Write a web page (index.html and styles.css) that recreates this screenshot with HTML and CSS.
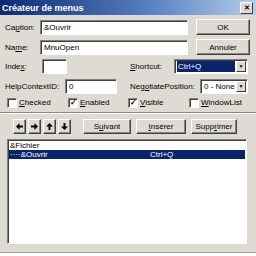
FILE: index.html
```html
<!DOCTYPE html>
<html lang="fr">
<head>
  <meta charset="UTF-8">
  <title>Créateur de menus</title>
  <link rel="stylesheet" href="styles.css">
</head>
<body>
  <div class="window">
    <div class="titlebar">
      <span class="title">Créateur de menus</span>
      <span class="close">✕</span>
    </div>

    <div class="content">
      <div class="row row-caption">
        <label class="lbl w-caption">Ca<u>p</u>tion:</label>
        <div class="field w-long">&amp;Ouvrir</div>
        <div class="btn w-side">OK</div>
      </div>

      <div class="row row-name">
        <label class="lbl w-caption">Na<u>m</u>e:</label>
        <div class="field w-long">MnuOpen</div>
        <div class="btn w-side">Annuler</div>
      </div>

      <div class="row row-index">
        <label class="lbl w-index">Inde<u>x</u>:</label>
        <div class="field w-small"></div>
        <label class="lbl w-shortcut"><u>S</u>hortcut:</label>
        <div class="combo w-combo1">
          <span class="combo-text selected">Ctrl+Q</span>
          <span class="drop">▼</span>
        </div>
      </div>

      <div class="row row-help">
        <label class="lbl w-help">HelpContextID:</label>
        <div class="field w-help-field">0</div>
        <label class="lbl w-nego">Neg<u>o</u>tiatePosition:</label>
        <div class="combo w-combo2">
          <span class="combo-text">0 - None</span>
          <span class="drop">▼</span>
        </div>
      </div>

      <div class="row checks">
        <div class="check"><span class="box"></span><span><u>C</u>hecked</span></div>
        <div class="check"><span class="box on">✓</span><span><u>E</u>nabled</span></div>
        <div class="check"><span class="box on">✓</span><span><u>V</u>isible</span></div>
        <div class="check"><span class="box"></span><span><u>W</u>indowList</span></div>
      </div>

      <div class="separator"></div>

      <div class="row toolbar">
        <div class="btn arrow">
          <svg width="7" height="7" viewBox="0 0 7 7"><path d="M0 3.5 L3.5 0 V2.5 H7 V4.5 H3.5 V7 Z" fill="#000"/></svg>
        </div>
        <div class="btn arrow">
          <svg width="7" height="7" viewBox="0 0 7 7"><path d="M7 3.5 L3.5 0 V2.5 H0 V4.5 H3.5 V7 Z" fill="#000"/></svg>
        </div>
        <div class="btn arrow">
          <svg width="7" height="7" viewBox="0 0 7 7"><path d="M3.5 0 L0 3.5 H2.5 V7 H4.5 V3.5 H7 Z" fill="#000"/></svg>
        </div>
        <div class="btn arrow">
          <svg width="7" height="7" viewBox="0 0 7 7"><path d="M3.5 7 L0 3.5 H2.5 V0 H4.5 V3.5 H7 Z" fill="#000"/></svg>
        </div>
        <div class="btn w-suivant">S<u>u</u>ivant</div>
        <div class="btn w-inserer"><u>I</u>nsérer</div>
        <div class="btn w-suppr">Supp<u>r</u>imer</div>
      </div>

      <div class="list">
        <div class="item">&amp;Fichier</div>
        <div class="item active"><span class="item-name">····&amp;Ouvrir</span><span>Ctrl+Q</span></div>
      </div>
    </div>
  </div>
</body>
</html>
```

FILE: styles.css
```css
body {
  margin: 0;
  background: #ffffff;
}

.window {
  width: 256px;
  height: 253px;
  background: #dedbd4;
  font-family: "Liberation Sans", Arial, sans-serif;
  font-size: 8px;
  color: #000;
  border-bottom: 1px solid #9c9a94;
  box-sizing: border-box;
}

.titlebar {
  height: 15px;
  display: flex;
  align-items: center;
  justify-content: space-between;
  background: linear-gradient(to right, #0c2a72, #5a82c4 60%, #b6cdea);
  padding: 0 3px 0 2px;
}

.title {
  color: #fff;
  font-weight: bold;
  font-size: 9px;
}

.close {
  width: 11px;
  height: 10px;
  background: #dedbd4;
  border: 1px solid;
  border-color: #fff #404040 #404040 #fff;
  font-size: 7px;
  line-height: 10px;
  text-align: center;
  font-weight: bold;
}

.content {
  padding: 0 0 0 5px;
}

.row {
  display: flex;
  align-items: center;
}

.row-caption { margin-top: 4px; height: 16px; }
.row-name { margin-top: 4px; height: 16px; }
.row-index { margin-top: 4px; height: 15px; }
.row-help { margin-top: 5px; height: 15px; }

.lbl { flex: none; }

.w-caption { width: 35px; }
.w-index { width: 37px; }
.w-shortcut { width: 44px; margin-left: 63px; }
.w-help { width: 60px; }
.w-nego { width: 70px; margin-left: 13px; }

.field {
  height: 15px;
  box-sizing: border-box;
  background: #fff;
  border: 1px solid;
  border-color: #808080 #fff #fff #808080;
  box-shadow: inset 1px 1px 0 #404040;
  padding: 2px 3px 0;
  line-height: 10px;
  flex: none;
}

.w-long { width: 148px; }
.w-small { width: 25px; }
.w-help-field { width: 52px; }

.btn {
  flex: none;
  height: 16px;
  box-sizing: border-box;
  background: #dedbd4;
  border: 1px solid;
  border-color: #fff #404040 #404040 #fff;
  box-shadow: inset -1px -1px 0 #8a8782;
  display: flex;
  align-items: center;
  justify-content: center;
}

.w-side { width: 54px; margin-left: 8px; }

.combo {
  flex: none;
  height: 15px;
  box-sizing: border-box;
  background: #fff;
  border: 1px solid;
  border-color: #808080 #fff #fff #808080;
  box-shadow: inset 1px 1px 0 #404040;
  display: flex;
  align-items: stretch;
  padding: 1px 1px 1px 2px;
}

.w-combo1 { width: 74px; }
.w-combo2 { width: 48px; }

.combo-text {
  flex: 1;
  line-height: 11px;
  padding-left: 1px;
}

.combo-text.selected {
  background: #0a246a;
  color: #fff;
  margin-right: 1px;
}

.drop {
  width: 10px;
  background: #dedbd4;
  border: 1px solid;
  border-color: #fff #404040 #404040 #fff;
  font-size: 5px;
  line-height: 9px;
  text-align: center;
  box-sizing: border-box;
}

.checks {
  margin-top: 3px;
  height: 11px;
  padding-left: 2px;
}

.check {
  display: flex;
  align-items: center;
  gap: 2px;
  width: 61px;
}

.check:nth-child(2) { width: 60px; }

.box {
  width: 10px;
  height: 10px;
  box-sizing: border-box;
  background: #fff;
  border: 1px solid;
  border-color: #808080 #fff #fff #808080;
  box-shadow: inset 1px 1px 0 #404040;
  font-size: 8px;
  line-height: 8px;
  text-align: center;
  font-weight: bold;
}

.separator {
  margin: 4px 0 0 -5px;
  height: 1px;
  background: #8a8782;
  border-bottom: 1px solid #fff;
}

.toolbar {
  margin-top: 5px;
  height: 15px;
  padding-left: 8px;
}

.toolbar .btn { height: 15px; }

.arrow {
  width: 13px;
  margin-right: 2px;
}

.w-suivant { width: 48px; margin-left: 10px; }
.w-inserer { width: 50px; margin-left: 5px; }
.w-suppr { width: 46px; margin-left: 5px; }

.list {
  margin: 5px 0 0 2px;
  width: 240px;
  height: 105px;
  box-sizing: border-box;
  background: #fff;
  border: 1px solid;
  border-color: #808080 #fff #fff #808080;
  box-shadow: inset 1px 1px 0 #404040;
  padding: 1px 1px 0 1px;
}

.item {
  height: 9px;
  line-height: 9px;
  padding-left: 1px;
  display: flex;
}

.item.active {
  background: #0a246a;
  color: #fff;
}

.item-name { width: 140px; }
```
